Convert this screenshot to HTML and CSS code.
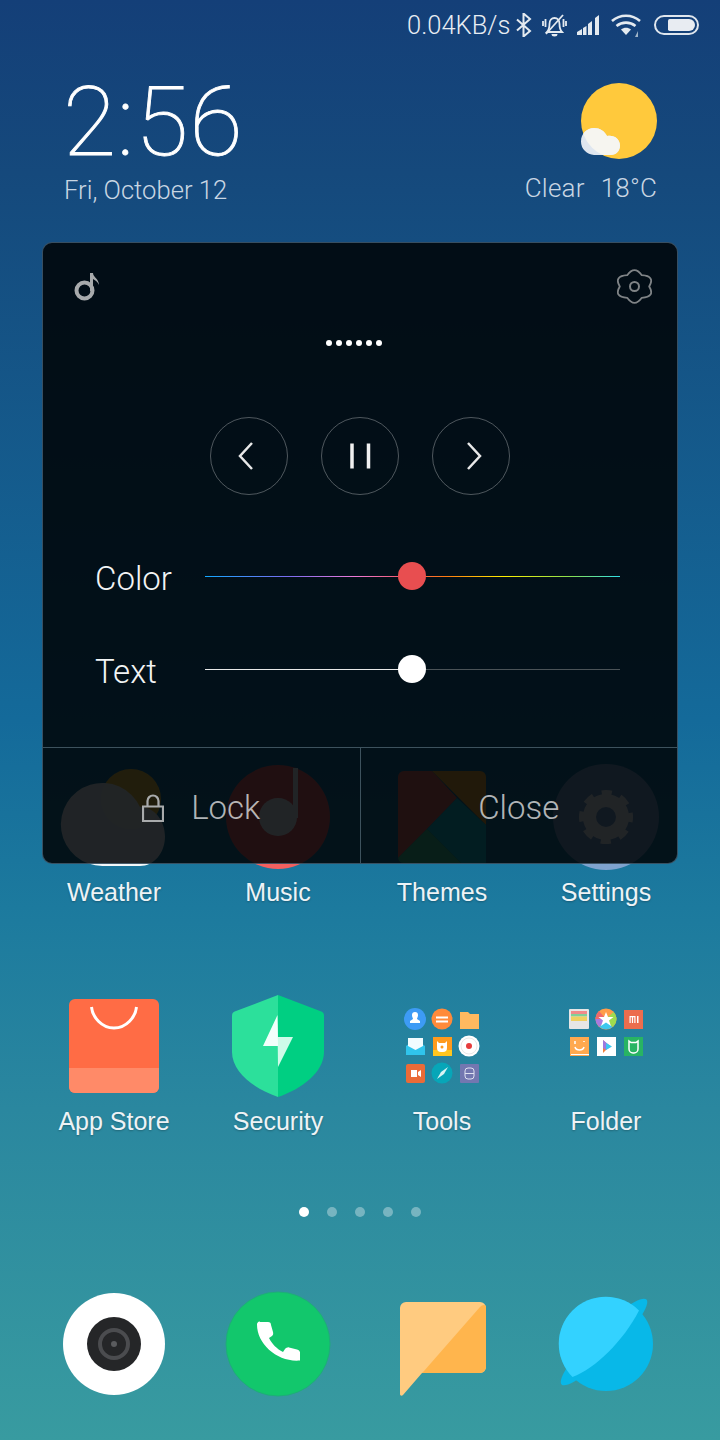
FILE: index.html
```html
<!DOCTYPE html>
<html lang="en">
<head>
<meta charset="utf-8">
<title>Home screen</title>
<link rel="stylesheet" href="styles.css">
</head>
<body>
<div class="screen">
  <header class="status">
    <span class="speed">0.04KB/s</span>
    <svg class="st-bt" viewBox="516 12 16 24"><path d="M517 18.500 530 30l-6.500 5.500V12.500L530 18 517 29.500" fill="none" stroke="#e4eaf0" stroke-width="2"/></svg>
    <svg class="st-bell" viewBox="542 13 25 23"><g fill="none" stroke="#e4eaf0" stroke-width="1.800"><path d="M547 31h15c-2-2-2.500-4-2.500-8 0-3.500-2-6-5-6s-5 2.500-5 6c0 4-.5 6-2.500 8Z"/><path d="M546 33 563 14"/><path d="M543 20v5M545.500 18v8M566 20v5M563.500 18v8"/></g><path d="M551.500 33h6a3 2.500 0 0 1-6 0Z" fill="#e4eaf0"/></svg>
    <svg class="st-sig" viewBox="577 13 23 21"><path d="M577 33v-3l5-3v6Zm6 0v-7l3.500-2v9Zm5 0V22l4-3v14Zm7 0V16l4-3v20Z" fill="#e4eaf0"/></svg>
    <svg class="st-wifi" viewBox="609 12 33 25"><g fill="none" stroke="#e4eaf0" stroke-width="2.600"><path d="M611 20c8-7 20-7 28 0"/><path d="M615.500 25c5.500-4.500 13.500-4.500 19 0"/></g><path d="M620 28.500c3-2.500 7-2.500 10 0l-5 5.500Z" fill="#e4eaf0"/><path d="M637 30v6h-3Z" fill="#9fb4c8"/></svg>
    <span class="battery"><span class="battery-fill"></span></span>
  </header>

  <section class="top">
    <div class="clock-block">
      <div class="clock">2:56</div>
      <div class="date">Fri, October 12</div>
    </div>
    <div class="weather-block">
      <svg class="sun" viewBox="578 80 82 82">
        <defs><clipPath id="sunclip"><circle cx="619" cy="121" r="38"/></clipPath></defs>
        <circle cx="619" cy="121" r="38" fill="#ffc93c"/>
        <path d="M594 155a13.500 13.500 0 0 1-13-13.500c0-8 6-13.500 13-13.500 6 0 10.500 3 13 8 7-1.500 13 3 13 9.500 0 5.500-4 9.500-9 9.500Z" fill="#dfe6ef"/>
        <path clip-path="url(#sunclip)" d="M594 155a13.500 13.500 0 0 1-13-13.500c0-8 6-13.500 13-13.500 6 0 10.500 3 13 8 7-1.500 13 3 13 9.500 0 5.500-4 9.500-9 9.500Z" fill="#f6f5f0"/>
      </svg>
      <div class="cond"><span>Clear</span><span>18°C</span></div>
    </div>
  </section>

  <section class="apps">
    <div class="app">
      <svg class="ico" viewBox="58 762 112 112">
        <circle cx="131" cy="799" r="30" fill="#ffc93c"/>
        <path d="M103 866a41.500 41.500 0 1 1 37-59c14 0 25 13 25 29.500s-11 29.500-25 29.500Z" fill="#fff" fill-opacity=".95"/>
      </svg>
      <span class="lbl">Weather</span>
    </div>
    <div class="app">
      <svg class="ico" viewBox="222 762 112 112">
        <circle cx="278" cy="817" r="52" fill="#f4605f"/>
        <circle cx="278" cy="817" r="19" fill="#fff"/>
        <rect x="293" y="768" width="5" height="50" fill="#fff"/>
      </svg>
      <span class="lbl">Music</span>
    </div>
    <div class="app">
      <svg class="ico" viewBox="386 762 112 112">
        <path d="M404 771h28l25 27-30 31-29 29V777a6 6 0 0 1 6-6Z" fill="#f0695a"/>
        <path d="M432 771h48a6 6 0 0 1 6 6v48Z" fill="#ffa726"/>
        <path d="M457 798l29 27v38h-25l-34-34Z" fill="#12c6d6"/>
        <path d="M398 858l29-29 34 34h-57a6 6 0 0 1-6-5Z" fill="#40d090"/>
      </svg>
      <span class="lbl">Themes</span>
    </div>
    <div class="app">
      <svg class="ico" viewBox="550 762 112 112">
        <circle cx="606" cy="817" r="53" fill="#7fa3cf"/>
        <circle cx="606" cy="817" r="16.500" fill="none" stroke="#fff" stroke-width="13"/>
        <circle cx="606" cy="817" r="24" fill="none" stroke="#fff" stroke-width="6" stroke-dasharray="10 8.850" stroke-dashoffset="5"/>
      </svg>
      <span class="lbl">Settings</span>
    </div>

    <div class="app">
      <svg class="ico" viewBox="58 991 112 112">
        <rect x="69" y="999" width="90" height="94" rx="6" fill="#ff6c45"/>
        <path d="M69 1068h90v19a6 6 0 0 1-6 6H75a6 6 0 0 1-6-6Z" fill="#ff8a68"/>
        <path d="M91.500 1007c1 10 10 21 22.500 21s21.500-11 22.500-21" fill="none" stroke="#fff" stroke-width="3"/>
      </svg>
      <span class="lbl">App Store</span>
    </div>
    <div class="app">
      <svg class="ico" viewBox="222 991 112 112">
        <path d="M278 995 236 1011c-3 1-4 2-4 5v36c0 20 22 37 46 45Z" fill="#2ce09b"/>
        <path d="M278 995 320 1011c3 1 4 2 4 5v36c0 20-22 37-46 45Z" fill="#00cf82"/>
        <path d="M277.500 1015 263 1046h15v21Z" fill="#f2fffb"/>
        <path d="M278 1037h15l-15 30Z" fill="#cffbe9"/>
        <path d="M277.500 1015 278 1037v9h-1Z" fill="#f2fffb"/>
      </svg>
      <span class="lbl">Security</span>
    </div>
    <div class="app">
      <svg class="ico" viewBox="386 991 112 112">
        <circle cx="415" cy="1019" r="11" fill="#3d9bf5"/>
        <path d="M412 1015a3 3 0 0 1 6 0c0 2-1 3-1 4l3 2v2h-10v-2l3-2c0-1-1-2-1-4Z" fill="#fff"/>
        <circle cx="442" cy="1019" r="10.500" fill="#ff8a3a"/>
        <path d="M436 1016.500h12v2h-12Zm0 4h12v2h-12Z" fill="#fff"/>
        <path d="M460 1012h8l2 2h9v15h-19Z" fill="#ffb95f"/>
        <path d="M406 1046l9.500-7 9.500 7v9h-19Z" fill="#30c4ec"/>
        <path d="M408 1038h15v8l-7.500 4-7.500-4Z" fill="#f2fcff"/>
        <rect x="433" y="1037" width="19" height="19" fill="#ff9a1e"/>
        <rect x="433" y="1050" width="19" height="6" fill="#ffc61e"/>
        <path d="M437 1041l2 2h6l2-2v7a4 4 0 0 1-4 4h-2a4 4 0 0 1-4-4Z" fill="#fff"/>
        <circle cx="442" cy="1047" r="1.500" fill="#ff9a1e"/>
        <circle cx="469" cy="1046" r="10.500" fill="#fff"/>
        <circle cx="469" cy="1046" r="8" fill="none" stroke="#e8e8e8"/>
        <circle cx="469" cy="1046" r="3" fill="#e63c3c"/>
        <rect x="406" y="1064" width="19" height="19" rx="2" fill="#ea6b38"/>
        <path d="M411 1070h6v7h-6Zm7 2 3-2v7l-3-2Z" fill="#fff"/>
        <circle cx="442" cy="1073" r="10.500" fill="#07a6b8"/>
        <path d="M437 1079l4-7 7-5-4 7Z" fill="#d8f4f4"/>
        <rect x="460" y="1064" width="19" height="19" rx="1" fill="#7377b0"/>
        <rect x="465" y="1068" width="9" height="11" rx="3" fill="none" stroke="#dfe0f0"/>
        <path d="M465 1073.500h9" stroke="#dfe0f0"/>
      </svg>
      <span class="lbl">Tools</span>
    </div>
    <div class="app">
      <svg class="ico" viewBox="550 991 112 112">
        <rect x="569" y="1009" width="20" height="20" rx="1" fill="#e6e6e6"/>
        <rect x="571" y="1011" width="16" height="3" fill="#f08a8a"/>
        <rect x="571" y="1014" width="16" height="2.500" fill="#7fd09a"/>
        <rect x="571" y="1016.500" width="16" height="4.500" fill="#f0d060"/>
        <circle cx="606" cy="1019" r="10.500" fill="#ff9d4a"/>
        <path d="M606 1019l-7-8a10.500 10.500 0 0 0-3.500 8Z" fill="#f06a6a"/>
        <path d="M606 1019h-10.500a10.500 10.500 0 0 0 4 8Z" fill="#a97ae0"/>
        <path d="M606 1019l-6.500 8a10.500 10.500 0 0 0 13 0Z" fill="#3cc8ee"/>
        <path d="M606 1019l6.500 8a10.500 10.500 0 0 0 4-8 10.500 10.500 0 0 0-3-7Z" fill="#9ddc50"/>
        <path d="M606 1012l2 5h5.500l-4.500 3.500 2 5.500-5-3.500-5 3.500 2-5.500-4.500-3.500h5.500Z" fill="#fff"/>
        <rect x="624" y="1010" width="19" height="19" fill="#ec6d4e"/>
        <path d="M629.500 1016h6v7h-1.200v-5.800h-1.200v5.800h-1.200v-5.800h-1.200v5.800h-1.200Zm7.500 0h1.500v7H637Z" fill="#fff"/>
        <rect x="570" y="1037" width="19" height="19" fill="#ffa94f"/>
        <path d="M575 1041v3M584 1041v1" stroke="#fff" stroke-width="1.500"/>
        <path d="M575 1047c1 4 8 4 9 0" fill="none" stroke="#fff" stroke-width="1.500"/>
        <rect x="571" y="1054" width="18" height="1" fill="#fff"/>
        <rect x="597" y="1037" width="19" height="19" fill="#fff"/>
        <path d="M603 1040l3 3v7l-3 3Z" fill="#f0813e"/>
        <path d="M603 1040l8 6.500-5 3.500-3-2Z" fill="#9c7adf"/>
        <path d="M606 1043l6 3.500-6 3.500Z" fill="#3cc8ee"/>
        <rect x="624" y="1037" width="19" height="19" fill="#28b463"/>
        <path d="M629 1041l2 1.500h5l2-1.500v8a4 4 0 0 1-4 4h-1a4 4 0 0 1-4-4Z" fill="none" stroke="#fff" stroke-width="1.500"/>
      </svg>
      <span class="lbl">Folder</span>
    </div>
  </section>

  <nav class="pager">
    <i class="dot on"></i><i class="dot"></i><i class="dot"></i><i class="dot"></i><i class="dot"></i>
  </nav>

  <section class="dock">
    <svg class="dock-ico" viewBox="58 1288 112 112">
      <circle cx="114" cy="1344" r="51" fill="#fff"/>
      <circle cx="114" cy="1344" r="27" fill="#252628"/>
      <circle cx="114" cy="1344" r="14" fill="none" stroke="#4b4c4f" stroke-width="4"/>
      <circle cx="114" cy="1344" r="3" fill="#5a5b5e"/>
    </svg>
    <svg class="dock-ico" viewBox="222 1288 112 112">
      <circle cx="278" cy="1344" r="52" fill="#12c76c" stroke="#1eae78"/>
      <path d="M260 1322h8c2 0 3 1 3 3l2 7c.5 2 0 3-1 4l-3 2c3 6 8 11 14 14l2-3c1-1 3-2 4-1.500l8 2c2 .5 3 2 3 3v8c-22 2-43-16-43-36 0-1 .5-3 3-3Z" fill="#fff"/>
    </svg>
    <svg class="dock-ico" viewBox="386 1288 112 112">
      <path d="M406 1302h74a6 6 0 0 1 6 6v59a6 6 0 0 1-6 6h-58l-19 22c-1 1-3 1-3-1v-86a6 6 0 0 1 6-6Z" fill="#ffcb80"/>
      <path d="M486 1306v61a6 6 0 0 1-6 6h-58l2-2 56-64c2-2 4-3 6-1Z" fill="#ffb54d"/>
    </svg>
    <svg class="dock-ico" viewBox="550 1288 112 112">
      <ellipse cx="604" cy="1342" rx="60" ry="12" transform="rotate(-45 604 1342)" fill="#08b8e8"/>
      <circle cx="606" cy="1344" r="47" fill="#08b8e8"/>
      <path d="M639 1310.500a47 47 0 0 0-66.500 66.500c22-8 51-36 66.500-66.500Z" fill="#33d2ff"/>
    </svg>
  </section>

  <aside class="panel">
    <div class="panel-top">
      <svg class="p-note" viewBox="74 272 26 30"><circle cx="84.500" cy="290.500" r="8" fill="none" stroke="#a8aaac" stroke-width="4"/><path d="M90 291V273h3c0 4 6 6 6 12-1-3-4-5-6-6v12Z" fill="#a8aaac"/></svg>
      <svg class="p-gear" viewBox="-17.500 -17.500 35 35"><path d="M-7.300-11.300Q0-21.500 7.300-11.300 21-10.500 14.700 0 21 10.500 7.300 11.300 0 21.500-7.300 11.300-21 10.500-14.700 0-21-10.500-7.300-11.300Z" fill="none" stroke="#7f8386" stroke-width="1.800" stroke-linejoin="round"/><circle r="4.500" fill="none" stroke="#7f8386" stroke-width="2"/></svg>
    </div>
    <div class="title-dots"><i></i><i></i><i></i><i></i><i></i><i></i></div>
    <div class="controls">
      <button class="ctl"><svg viewBox="0 0 24 32" class="ctl-ico"><path d="M15 3 3 16l12 13" fill="none" stroke="#e8e8e8" stroke-width="2.500"/></svg></button>
      <button class="ctl"><svg viewBox="0 0 24 32" class="ctl-ico"><path d="M4 3.500v25M20.500 3.500v25" fill="none" stroke="#f0f0f0" stroke-width="3.500"/></svg></button>
      <button class="ctl"><svg viewBox="0 0 24 32" class="ctl-ico"><path d="M9 3l12 13L9 29" fill="none" stroke="#e8e8e8" stroke-width="2.500"/></svg></button>
    </div>
    <div class="sliders">
      <div class="slider">
        <span class="s-label">Color</span>
        <div class="track track-color"><span class="thumb thumb-red"></span></div>
      </div>
      <div class="slider">
        <span class="s-label">Text</span>
        <div class="track track-text"><span class="thumb thumb-white"></span></div>
      </div>
    </div>
    <div class="actions">
      <div class="action">
        <svg class="lock" viewBox="0 0 22 28"><path d="M1 12.500h20v14.500H1ZM5.500 12.500V7a5.500 5.500 0 0 1 11 0v5.500" fill="none" stroke="#a9abac" stroke-width="2.200"/></svg>
        <span class="lock-text">Lock</span>
      </div>
      <div class="action action-close"><span>Close</span></div>
    </div>
  </aside>
</div>
</body>
</html>
```
FILE: styles.css
```css
* { box-sizing: border-box; }
html, body { margin: 0; padding: 0; }
body { width: 720px; height: 1440px; overflow: hidden; font-family: "Liberation Sans", Arial, sans-serif; }
.screen {
  position: relative;
  width: 720px;
  height: 1440px;
  display: flex;
  flex-direction: column;
  overflow: hidden;
  color: #fff;
  background: linear-gradient(180deg, #143f78 0%, #15497c 12%, #146a9a 50%, #1c7a9e 63%, #2a879f 77%, #389ba0 100%);
}
.status {
  height: 50px;
  display: flex;
  align-items: center;
  padding: 0 21px 0 407px;
  flex: none;
}
.speed { font-family: Roboto, sans-serif; font-weight: 300; font-size: 25.500px; color: #e8edf3; width: 109px; white-space: nowrap; }
.status svg { display: block; flex: none; }
.st-bt { width: 16px; height: 24px; margin-right: 10px; }
.st-bell { width: 25px; height: 23px; margin-right: 10px; }
.st-sig { width: 23px; height: 21px; margin: 0 10px 0 0; }
.st-wifi { width: 33px; height: 25px; margin-right: 11px; }
.battery {
  width: 45px; height: 20px; border: 2px solid #dfe6ee; border-radius: 10px;
  padding: 2px 2px 2px 12px; display: block; flex: none;
}
.battery-fill { display: block; height: 100%; background: #e8ecf2; border-radius: 2px 7px 7px 2px; }

.top {
  height: 174px;
  flex: none;
  display: flex;
  justify-content: space-between;
  padding: 0 63px 0 63px;
}
.clock-block { display: flex; flex-direction: column; padding-top: 18px; }
.clock { font-family: Roboto, "Liberation Sans", sans-serif; font-size: 97px; line-height: 108px; font-weight: 100; -webkit-text-stroke: .9px #fff; letter-spacing: 1px; white-space: nowrap; }
.date { font-family: Roboto, sans-serif; font-weight: 300; font-size: 25.600px; line-height: 28px; color: #c9d6e3; margin-left: 1px; }
.weather-block { display: flex; flex-direction: column; align-items: flex-end; padding-top: 30px; }
.sun { width: 82px; height: 82px; display: block; margin-right: -3px; }
.cond { font-family: Roboto, sans-serif; font-weight: 300; display: flex; gap: 16px; font-size: 26px; letter-spacing: .2px; line-height: 30px; color: #c9d6e3; margin-top: 11px; }

.apps {
  margin-top: 538px;
  padding-left: 32px;
  display: grid;
  grid-template-columns: repeat(4, 164px);
  row-gap: 84px;
  flex: none;
}
.app { display: flex; flex-direction: column; align-items: center; }
.ico { width: 112px; height: 112px; display: block; overflow: visible; }
.lbl { font-size: 25px; line-height: 30px; margin-top: 3px; color: #eef3f6; text-shadow: 0 1px 2px rgba(0,0,0,.25); white-space: nowrap; }

.pager { display: flex; justify-content: center; gap: 18px; padding-top: 71px; flex: none; }
.dot { width: 10px; height: 10px; border-radius: 50%; background: rgba(255,255,255,.35); display: block; }
.dot.on { background: #fff; }

.dock {
  margin-top: 71px;
  padding-left: 32px;
  display: grid;
  grid-template-columns: repeat(4, 164px);
  justify-items: center;
}
.dock-ico { width: 112px; height: 112px; display: block; overflow: visible; }

.panel {
  position: absolute;
  left: 42px;
  top: 242px;
  width: 636px;
  height: 622px;
  background: rgba(0,3,6,.87);
  border: 1px solid rgba(120,160,190,.45);
  border-radius: 10px;
  display: flex;
  flex-direction: column;
}
.panel-top { display: flex; justify-content: space-between; padding: 26px 25px 0 31px; height: 60px; align-items: flex-start; }
.p-note { width: 26px; height: 30px; display: block; margin-top: 3px; }
.p-gear { width: 35px; height: 35px; display: block; }
.title-dots { display: flex; gap: 4px; padding-left: 283px; margin-top: 37px; height: 6px; }
.title-dots i { width: 6px; height: 6px; border-radius: 50%; background: #fff; display: block; }
.controls { display: flex; justify-content: center; gap: 33px; margin-top: 71px; }
.ctl {
  width: 78px; height: 78px; padding: 0; border-radius: 50%;
  background: transparent; border: 1px solid rgba(255,255,255,.3);
  display: flex; align-items: center; justify-content: center;
}
.ctl-ico { width: 24px; height: 32px; display: block; }
.sliders { display: flex; flex-direction: column; gap: 63px; margin-top: 66px; padding: 0 57px 0 52px; }
.slider { display: flex; align-items: center; height: 30px; }
.s-label { font-family: Roboto, sans-serif; font-weight: 300; font-size: 33px; line-height: 30px; width: 110px; flex: none; color: #f2f4f5; padding-top: 5px; }
.track { position: relative; height: 1px; flex: 1; }
.track-color { background: linear-gradient(90deg, #12a8ff 0%, #7a6cf0 20%, #ee7ad8 36%, #f25a6a 48%, #ff7a10 58%, #fff000 72%, #8adf50 88%, #30e0e8 100%); }
.track-text { background: linear-gradient(90deg, #e8e8e8 0 50%, #4b5357 50% 100%); }
.thumb { position: absolute; left: 193px; top: -14px; width: 28px; height: 28px; border-radius: 50%; }
.thumb-red { background: #e84e50; }
.thumb-white { background: #fff; }
.actions { margin-top: auto; height: 116px; display: flex; border-top: 1px solid rgba(150,180,195,.4); font-family: Roboto, sans-serif; font-weight: 300; }
.action { flex: 1; display: flex; align-items: center; justify-content: center; font-size: 33px; color: rgba(255,255,255,.7); padding-top: 4px; }
.action-close { border-left: 1px solid rgba(150,180,195,.4); }
.lock { width: 22px; height: 28px; display: block; margin-right: 27px; }
.lock-text { display: block; }
```
